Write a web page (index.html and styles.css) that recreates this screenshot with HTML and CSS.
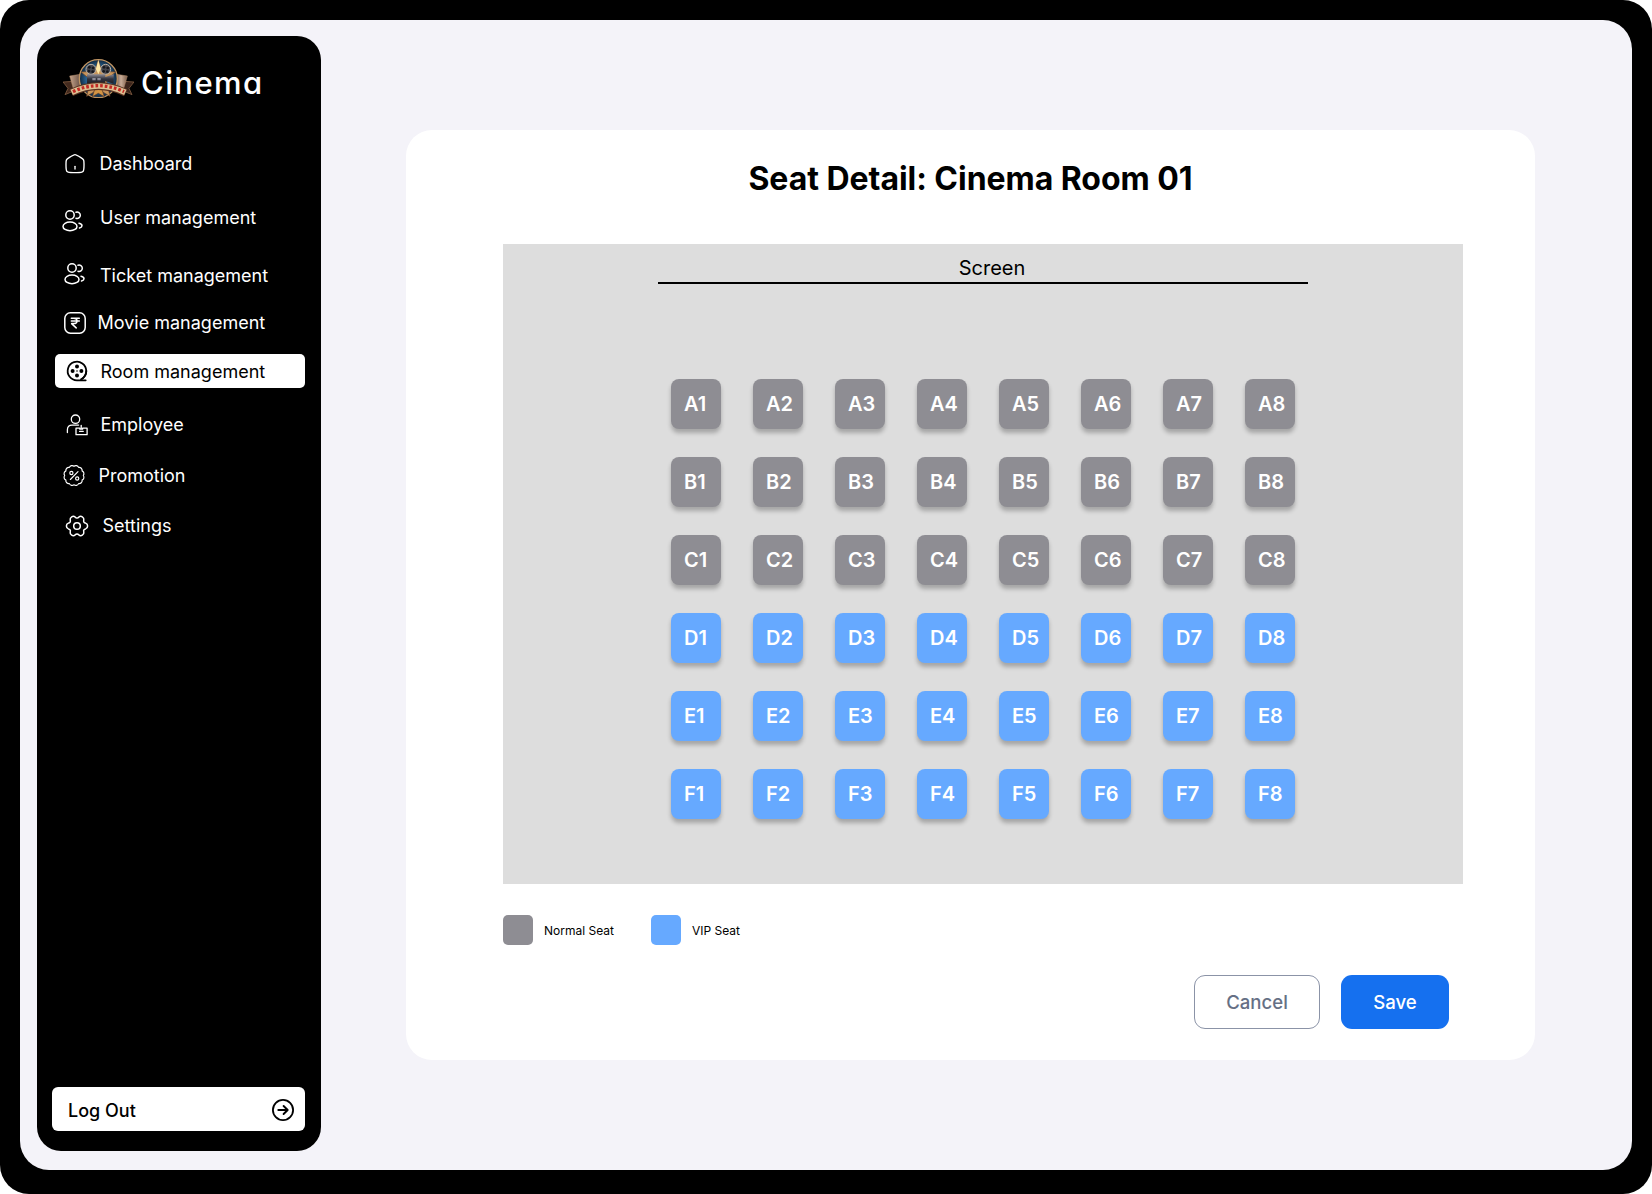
FILE: index.html
```html
<!DOCTYPE html>
<html lang="en">
<head>
<meta charset="utf-8">
<title>Seat Detail: Cinema Room 01</title>
<link rel="stylesheet" href="styles.css">
</head>
<body>
<div class="frame">
<div class="app">
  <aside class="sidebar">
    <div class="brand">
      <svg class="brand-logo" viewBox="0 0 213 117">
        <defs>
          <radialGradient id="disc"><stop offset="0" stop-color="#4b9acb"/><stop offset=".65" stop-color="#265f8d"/><stop offset="1" stop-color="#10263c"/></radialGradient>
          <linearGradient id="fold-left"><stop offset="0" stop-color="#c9a68c"/><stop offset="1" stop-color="#57423a"/></linearGradient>
          <linearGradient id="fold-right"><stop offset="0" stop-color="#57423a"/><stop offset=".5" stop-color="#c9ad98"/><stop offset="1" stop-color="#7a5c49"/></linearGradient>
          <linearGradient id="body" x2="0" y2="1"><stop offset="0" stop-color="#8d8c96"/><stop offset=".4" stop-color="#33333d"/><stop offset="1" stop-color="#15161c"/></linearGradient>
        </defs>
        <path d="M0 69 30 67 42 92 6 107 15 88Z" fill="#432a1e" stroke="#94694a" stroke-width="2"/>
        <path d="M213 69 183 67 171 92 207 107 198 88Z" fill="#3a241b" stroke="#94694a" stroke-width="2"/>
        <path d="M20 51 52 46 58 86 32 92Z" fill="url(#fold-left)" stroke="#b78f6c" stroke-width="1.5"/>
        <path d="M193 51 161 46 155 86 181 92Z" fill="url(#fold-right)" stroke="#b78f6c" stroke-width="1.5"/>
        <circle cx="106" cy="59" r="57" fill="url(#disc)" stroke="#c09563" stroke-width="4"/>
        <path d="M106 3 117 37 158 39 130 62 141 112 106 91 71 112 82 62 54 39 95 37Z" fill="#c8955b" stroke="#694329" stroke-width="2"/>
        <circle cx="84" cy="31" r="15" fill="#45454c" stroke="#b9b0a5" stroke-width="3"/>
        <circle cx="128" cy="31" r="15" fill="#45454c" stroke="#b9b0a5" stroke-width="3"/>
        <g fill="#17181d"><circle cx="79" cy="25" r="4"/><circle cx="90" cy="27" r="4"/><circle cx="78" cy="36" r="4"/><circle cx="89" cy="38" r="4"/><circle cx="123" cy="25" r="4"/><circle cx="134" cy="27" r="4"/><circle cx="122" cy="37" r="4"/><circle cx="133" cy="38" r="4"/></g>
        <path d="M106 2 113 30 106 46 99 30Z" fill="#ffe9a5"/>
        <path d="M72 46H127V54L152 46V74L127 66V80H72Z" fill="url(#body)"/>
        <path d="M88 57H98V64H88ZM103 57H113V64H103Z" fill="#8f8e99"/>
        <path d="M94 94 106 83 118 94 124 113 106 103 88 113Z" fill="#d39545" stroke="#533426" stroke-width="2"/>
        <path d="M25 101Q106 62 188 101" fill="none" stroke="#5b3322" stroke-width="23"/>
        <path d="M26 100Q106 62 187 100" fill="none" stroke="#dcc093" stroke-width="17"/>
        <path d="M30 98Q106 62 183 98" fill="none" stroke="#c32a24" stroke-width="10" stroke-dasharray="8 6"/>
      </svg>
      <span class="brand-name">Cinema</span>
    </div>
    <nav class="nav">
      <a class="nav-item dashboard">
        <svg class="icon" viewBox="0 0 24 24"><g transform="translate(1.2 .8) scale(.9)"><path d="M2 12.2c0-2.3 0-3.4.52-4.4.52-.9 1.47-1.5 3.36-2.7l2-1.24C9.89 2.62 10.9 2 12 2s2.11.62 4.12 1.87l2 1.24c1.9 1.18 2.84 1.77 3.36 2.72.52.94.52 2.08.52 4.37v1.52c0 3.9 0 5.85-1.17 7.06S17.77 22 14 22h-4c-3.77 0-5.66 0-6.83-1.21S2 17.63 2 13.73z"/><path d="M12 15v3"/></g></svg>
        <span>Dashboard</span>
      </a>
      <a class="nav-item users">
        <svg class="icon" viewBox="0 0 24 24"><circle cx="9" cy="6" r="4.2"/><path d="M15 9.3a3.2 3.2 0 1 0 0-6"/><ellipse cx="9" cy="17.4" rx="7" ry="4.3"/><path d="M18 14.2c1.75.39 3 1.36 3 2.5 0 1.03-1 1.92-2.5 2.37"/></svg>
        <span>User management</span>
      </a>
      <a class="nav-item tickets">
        <svg class="icon" viewBox="0 0 24 24"><circle cx="9" cy="6" r="4.2"/><path d="M15 9.3a3.2 3.2 0 1 0 0-6"/><ellipse cx="9" cy="17.4" rx="7" ry="4.3"/><path d="M18 14.2c1.75.39 3 1.36 3 2.5 0 1.03-1 1.92-2.5 2.37"/></svg>
        <span>Ticket management</span>
      </a>
      <a class="nav-item movies">
        <svg class="icon" viewBox="0 0 24 24"><rect x="1.8" y="1.8" width="20.4" height="20.4" rx="5.6"/><path d="M8.3 7.2h8M8.3 10h8M8.3 7.2h2.4c4.4 0 4.4 5.4 0 5.4H8.6l4.6 4.3"/></svg>
        <span>Movie management</span>
      </a>
      <a class="nav-item rooms active">
        <svg class="icon" viewBox="0 0 24 24"><path d="M20.7 21.3H12a9.3 9.3 0 1 1 5.6-1.9" stroke-width="1.8"/><path d="M16 20.3a9.3 9.3 0 0 0 5.3-8.3" stroke-width="1.8"/><g class="solid"><circle cx="12" cy="7.6" r="2"/><circle cx="12" cy="16.4" r="2"/><circle cx="7.6" cy="12" r="2"/><circle cx="16.4" cy="12" r="2"/><circle cx="12" cy="12" r=".8"/></g></svg>
        <span>Room management</span>
      </a>
      <a class="nav-item employee">
        <svg class="icon" viewBox="0 0 24 24"><g stroke-width="1.3"><circle cx="10.5" cy="6.2" r="4.2"/><path d="M2.4 19.5v-2.7c0-3 1.8-4.7 4.6-4.7h6.6M11 15.2h3.8v1h2.8v-1h4.5v6.5H11zM16.2 12.3v3M14.6 18.4h3.6"/></g></svg>
        <span>Employee</span>
      </a>
      <a class="nav-item promotion">
        <svg class="icon" viewBox="0 0 24 24"><g stroke-width="1.15" transform="translate(0 -.5)"><path d="M21.3 12A3 3 0 0 1 20.1 16.6 3 3 0 0 1 16.6 20.1 3 3 0 0 1 12 21.3 3 3 0 0 1 7.4 20.1 3 3 0 0 1 3.9 16.6 3 3 0 0 1 2.7 12 3 3 0 0 1 3.9 7.4 3 3 0 0 1 7.4 3.9 3 3 0 0 1 12 2.7 3 3 0 0 1 16.6 3.9 3 3 0 0 1 20.1 7.4 3 3 0 0 1 21.3 12z"/><path d="M16 8.2 8.4 16"/><circle cx="9.4" cy="9.5" r="1.6"/><circle cx="15.2" cy="15" r="1.6"/></g></svg>
        <span>Promotion</span>
      </a>
      <a class="nav-item settings">
        <svg class="icon" viewBox="0 0 24 24"><g transform="translate(12 12)"><circle r="3.3"/><path d="M8.6-2.9A3.1 3.1 0 0 1 8.6 2.9 2.2 2.2 0 0 0 6.81 6 3.1 3.1 0 0 1 1.79 8.9 2.2 2.2 0 0 0-1.79 8.9 3.1 3.1 0 0 1-6.81 6 2.2 2.2 0 0 0-8.6 2.9 3.1 3.1 0 0 1-8.6-2.9 2.2 2.2 0 0 0-6.81-6 3.1 3.1 0 0 1-1.79-8.9 2.2 2.2 0 0 0 1.79-8.9 3.1 3.1 0 0 1 6.81-6 2.2 2.2 0 0 0 8.6-2.9z"/></g></svg>
        <span>Settings</span>
      </a>
    </nav>
    <button class="logout">
      <span>Log Out</span>
      <svg class="icon" viewBox="0 0 24 24"><circle cx="12" cy="12" r="10.1" stroke-width="1.8"/><path d="M7.3 12h9.4M12.6 8l4.1 4-4.1 4" stroke-width="1.9"/></svg>
    </button>
  </aside>

  <main class="card">
    <h1 class="title">Seat Detail: Cinema Room 01</h1>
    <section class="room">
      <div class="screen">Screen</div>
      <div class="seats">
        <span class="seat">A1</span><span class="seat">A2</span><span class="seat">A3</span><span class="seat">A4</span><span class="seat">A5</span><span class="seat">A6</span><span class="seat">A7</span><span class="seat">A8</span>
        <span class="seat">B1</span><span class="seat">B2</span><span class="seat">B3</span><span class="seat">B4</span><span class="seat">B5</span><span class="seat">B6</span><span class="seat">B7</span><span class="seat">B8</span>
        <span class="seat">C1</span><span class="seat">C2</span><span class="seat">C3</span><span class="seat">C4</span><span class="seat">C5</span><span class="seat">C6</span><span class="seat">C7</span><span class="seat">C8</span>
        <span class="seat vip">D1</span><span class="seat vip">D2</span><span class="seat vip">D3</span><span class="seat vip">D4</span><span class="seat vip">D5</span><span class="seat vip">D6</span><span class="seat vip">D7</span><span class="seat vip">D8</span>
        <span class="seat vip">E1</span><span class="seat vip">E2</span><span class="seat vip">E3</span><span class="seat vip">E4</span><span class="seat vip">E5</span><span class="seat vip">E6</span><span class="seat vip">E7</span><span class="seat vip">E8</span>
        <span class="seat vip">F1</span><span class="seat vip">F2</span><span class="seat vip">F3</span><span class="seat vip">F4</span><span class="seat vip">F5</span><span class="seat vip">F6</span><span class="seat vip">F7</span><span class="seat vip">F8</span>
      </div>
    </section>
    <div class="legend">
      <div class="legend-item"><i class="swatch"></i>Normal Seat</div>
      <div class="legend-item"><i class="swatch vip"></i>VIP Seat</div>
    </div>
    <div class="actions">
      <button class="btn cancel">Cancel</button>
      <button class="btn save">Save</button>
    </div>
  </main>
</div>
</div>
</body>
</html>
```
FILE: styles.css
```css
* { box-sizing: border-box; }

body {
  margin: 0;
  background: #fff;
  font-family: Inter, "Liberation Sans", sans-serif;
  color: #000;
}

button { font: inherit; }

.frame {
  width: 1652px;
  height: 1194px;
  padding: 20px 20px 24px;
  background: #000;
  border-radius: 29px;
}

.app {
  display: flex;
  align-items: flex-start;
  height: 1150px;
  padding: 16px 17px;
  background: #f4f3f9;
  border-radius: 29px;
}

/* Sidebar */
.sidebar {
  display: flex;
  flex-direction: column;
  width: 284px;
  height: 1115px;
  padding: 23px 16px 20px 15px;
  background: #000;
  border-radius: 24px;
  color: #fff;
}

.brand {
  display: flex;
  align-items: flex-start;
  height: 46px;
  padding-left: 11px;
}

.brand-logo {
  width: 71px;
  height: 39px;
}

.brand-name {
  margin: 4px 0 0 7px;
  font-size: 31px;
  line-height: 40px;
  font-weight: 500;
  letter-spacing: 1.4px;
  font-feature-settings: "cv11";
}

.nav {
  display: flex;
  flex-direction: column;
  margin-left: 3px;
}

.nav-item {
  display: flex;
  align-items: center;
  height: 34px;
  border-radius: 5px;
  font-size: 18px;
  font-weight: 400;
  line-height: 24px;
}

.icon {
  flex: none;
  width: 24px;
  height: 24px;
  fill: none;
  stroke: currentColor;
  stroke-width: 1.5;
  stroke-linecap: round;
  stroke-linejoin: round;
}

.solid {
  fill: currentColor;
  stroke: none;
}

.dashboard { margin-top: 42px; padding-left: 8px; gap: 12.5px; }
.users { margin-top: 20px; padding-left: 6px; gap: 15px; }
.users .icon { margin-top: 6px; }
.tickets { margin-top: 24px; padding-left: 8px; gap: 13px; }
.tickets .icon { margin-top: -4px; }
.movies { margin-top: 13px; padding-left: 8px; gap: 10.5px; }
.movies .icon { margin-top: -1px; }
.rooms { margin-top: 14px; padding-left: 10px; gap: 11.5px; }
.rooms span { margin-top: 1px; }
.employee { margin-top: 20px; padding-left: 9.5px; gap: 12px; }
.promotion { margin-top: 17px; padding-left: 7px; gap: 12.5px; }
.settings { margin-top: 16px; padding-left: 10px; gap: 13.5px; }

.active {
  background: #fff;
  color: #000;
}

.logout {
  display: flex;
  align-items: center;
  justify-content: space-between;
  height: 44px;
  margin-top: auto;
  padding: 2px 10px 0 16px;
  border: 0;
  border-radius: 6px;
  background: #fff;
  color: #000;
  font-size: 18px;
  font-weight: 500;
}

/* Seat card */
.card {
  width: 1129px;
  height: 930px;
  margin: 94px 0 0 85px;
  padding: 29px 72px 0 97px;
  background: #fff;
  border-radius: 26px;
}

.title {
  width: 1129px;
  margin: 0 0 46px -97px;
  font-size: 32px;
  line-height: 39px;
  font-weight: 700;
  letter-spacing: -.04px;
  text-align: center;
}

.room {
  display: flex;
  flex-direction: column;
  align-items: center;
  height: 640px;
  background: #ddd;
}

.screen {
  width: 650px;
  height: 40px;
  padding: 12px 0 0 18px;
  border-bottom: 2px solid #000;
  font-size: 20px;
  line-height: 24px;
  text-align: center;
}

.seats {
  display: grid;
  grid-template-columns: repeat(8, 50px);
  grid-auto-rows: 50px;
  gap: 28px 32px;
  margin-top: 95px;
}

.seat {
  padding-left: 13px;
  background: #8e8d93;
  border-radius: 8px;
  box-shadow: 0 4px 4px rgba(0, 0, 0, .25);
  color: #fff;
  font-size: 20px;
  font-weight: 600;
  line-height: 50px;
}

.vip { background: #66a9ff; }

.legend {
  display: flex;
  gap: 37px;
  margin-top: 31px;
}

.legend-item {
  display: flex;
  align-items: center;
  gap: 11px;
  font-size: 12px;
}

.swatch {
  width: 30px;
  height: 30px;
  background: #8e8d93;
  border-radius: 5px;
}

.swatch.vip { background: #66a9ff; }

.actions {
  display: flex;
  justify-content: flex-end;
  gap: 21px;
  margin-top: 30px;
  padding-right: 14px;
}

.btn {
  height: 54px;
  padding: 0;
  border: 0;
  border-radius: 11px;
  font-size: 18.6px;
  font-weight: 500;
}

.cancel {
  width: 126px;
  border: 1px solid #8b93a7;
  background: #fff;
  color: #667085;
}

.save {
  width: 108px;
  background: #1570ef;
  color: #fff;
}
```
